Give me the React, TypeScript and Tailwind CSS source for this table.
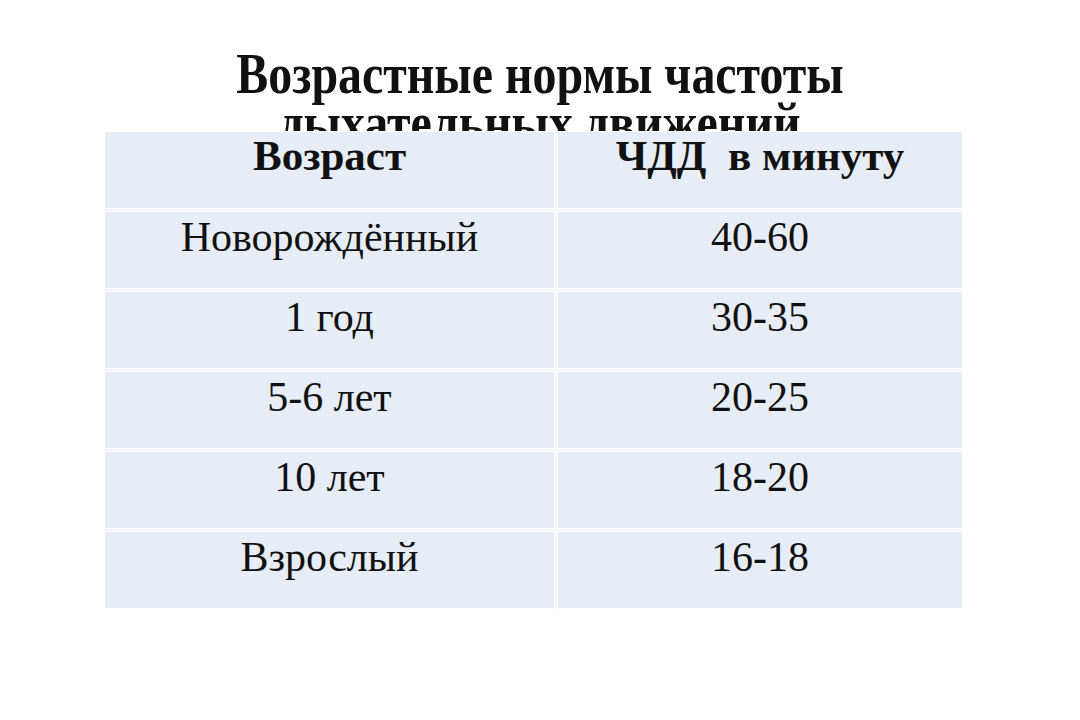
const rows = [
  { age: 'Новорождённый', rate: '40-60' },
  { age: '1 год', rate: '30-35' },
  { age: '5-6 лет', rate: '20-25' },
  { age: '10 лет', rate: '18-20' },
  { age: 'Взрослый', rate: '16-18' },
];

export default function App() {
  return (
    <div className="w-[1080px] h-[720px] bg-white text-[#111] font-['Liberation_Serif','Times_New_Roman',serif]">
      {/* Title, second line runs under the table */}
      <div className="h-[131px] overflow-hidden pt-[50px] text-center font-bold text-[56px] leading-[49px]">
        <div className="scale-x-[0.855]">Возрастные нормы частоты</div>
        <div className="scale-x-[0.855]">дыхательных движений</div>
      </div>

      {/* Table */}
      <div className="ml-[104px] w-[859px] grid grid-cols-[451px_406px] auto-rows-[78px] gap-[2px] bg-[#f4f7fb]">
        <div className="bg-[#e6edf6] border border-white text-center font-bold text-[43px] leading-[43px] pt-[2px]">
          Возраст
        </div>
        <div className="bg-[#e6edf6] border border-white text-center font-bold text-[43px] leading-[43px] pt-[2px] whitespace-pre">
          ЧДД  в минуту
        </div>
        {rows.map(r => (
          <>
            <div key={r.age} className="bg-[#e6edf6] border border-white text-center text-[42px] leading-[42px] pt-[4px]">
              {r.age}
            </div>
            <div key={r.rate} className="bg-[#e6edf6] border border-white text-center text-[42px] leading-[42px] pt-[4px]">
              {r.rate}
            </div>
          </>
        ))}
      </div>
    </div>
  );
}
